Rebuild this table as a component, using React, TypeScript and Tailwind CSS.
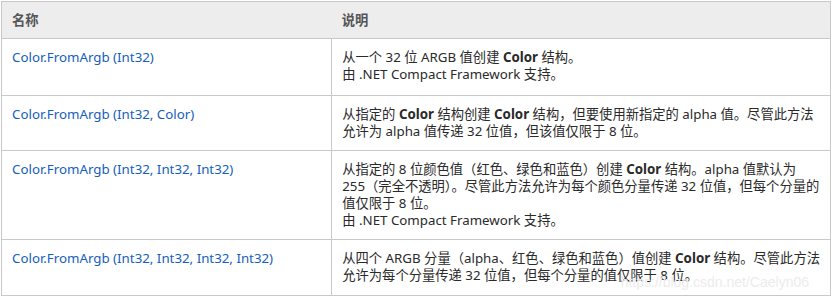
import React from 'react';

const rows: { name: string; lines: React.ReactNode[]; h: string }[] = [
  {
    name: 'Color.FromArgb (Int32)',
    h: 'h-[57px]',
    lines: [
      <>从一个 32 位 ARGB 值创建 <b>Color</b> 结构。</>,
      <>由 .NET Compact Framework 支持。</>,
    ],
  },
  {
    name: 'Color.FromArgb (Int32, Color)',
    h: 'h-[55px]',
    lines: [
      <>从指定的 <b>Color</b> 结构创建 <b>Color</b> 结构，但要使用新指定的 alpha 值。尽管此方法</>,
      <>允许为 alpha 值传递 32 位值，但该值仅限于 8 位。</>,
    ],
  },
  {
    name: 'Color.FromArgb (Int32, Int32, Int32)',
    h: 'h-[89px]',
    lines: [
      <>从指定的 8 位颜色值（红色、绿色和蓝色）创建 <b>Color</b> 结构。alpha 值默认为</>,
      <>255（完全不透明）。尽管此方法允许为每个颜色分量传递 32 位值，但每个分量的</>,
      <>值仅限于 8 位。</>,
      <>由 .NET Compact Framework 支持。</>,
    ],
  },
  {
    name: 'Color.FromArgb (Int32, Int32, Int32, Int32)',
    h: 'h-[56px]',
    lines: [
      <>从四个 ARGB 分量（alpha、红色、绿色和蓝色）值创建 <b>Color</b> 结构。尽管此方法</>,
      <>允许为每个分量传递 32 位值，但每个分量的值仅限于 8 位。</>,
    ],
  },
];

export default function App() {
  return (
    <div className="relative w-[831px] h-[297px] bg-white pt-[1px] pl-[1px] font-['Noto_Sans','Noto_Sans_CJK_SC',sans-serif] text-[13.3px] leading-[17px] text-[#2a2a2a]">
      <table className="w-[830px] border-collapse border border-[#c8c8c8]">
        <thead>
          <tr className="h-[37px] bg-[#ededed]">
            <th className="w-[333px] text-left font-semibold text-[#555] px-[10px] align-middle">名称</th>
            <th className="text-left font-semibold text-[#555] px-[10px] align-middle">说明</th>
          </tr>
        </thead>
        <tbody>
          {rows.map((r) => (
            <tr key={r.name} className={r.h}>
              <td className="border border-[#c8c8c8] align-top px-[10px] pt-[10px] text-[#1560bd] whitespace-nowrap">
                {r.name}
              </td>
              <td className="border border-[#c8c8c8] align-top px-[10px] pt-[10px] whitespace-nowrap">
                {r.lines.map((l, i) => (
                  <div key={i}>{l}</div>
                ))}
              </td>
            </tr>
          ))}
        </tbody>
      </table>
      <div className="absolute right-[22px] bottom-[6px] text-[14px] text-[#ececec] font-['Liberation_Sans',sans-serif]">
        https://blog.csdn.net/Caelyn06
      </div>
    </div>
  );
}
